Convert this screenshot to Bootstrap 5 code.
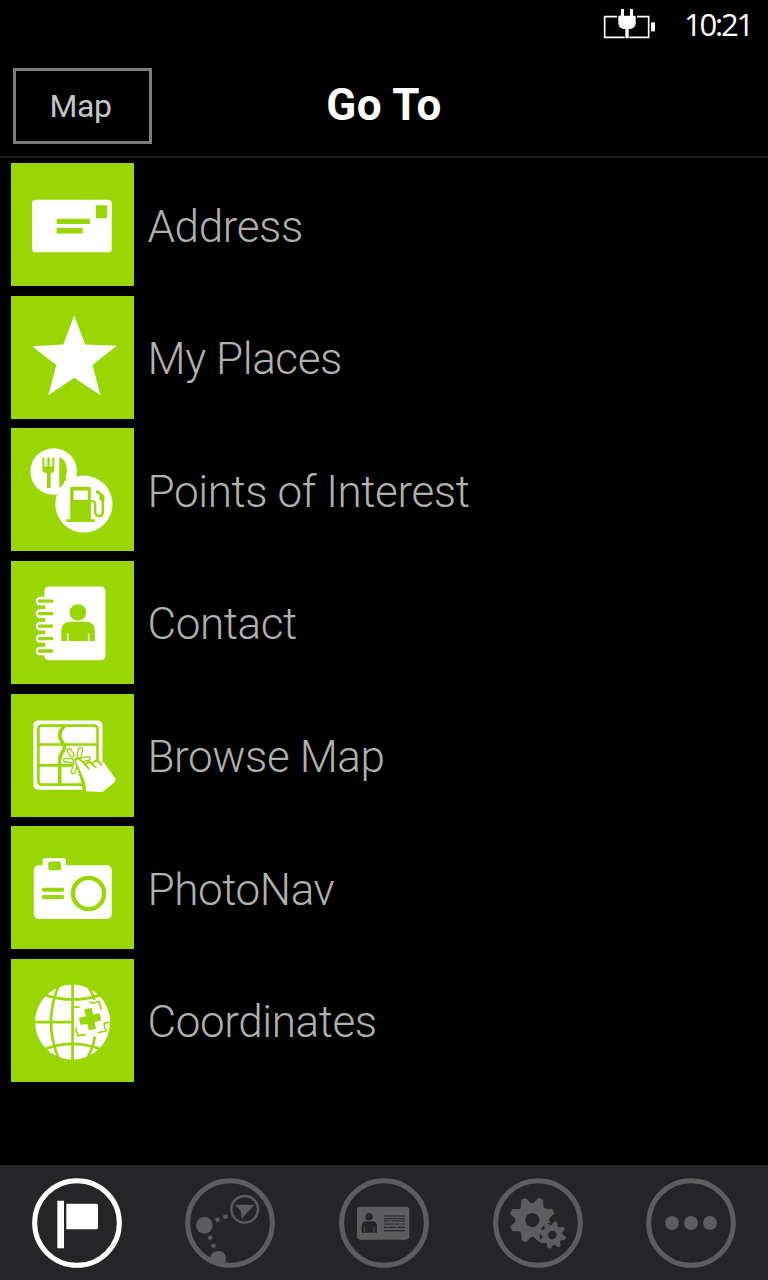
<!DOCTYPE html>
<html lang="en">
<head>
<meta charset="utf-8">
<meta name="viewport" content="width=device-width, initial-scale=1">
<title>Go To</title>
<link href="https://cdn.jsdelivr.net/npm/bootstrap@5.3.0/dist/css/bootstrap.min.css" rel="stylesheet">
<style>
  :root { --lime: #99d603; --dim: #5d5d5f; --bar: #252527; }
  body { background: #000; color: #b3b3b3; font-family: Roboto, sans-serif; }
  .screen { width: 768px; height: 1280px; overflow: hidden; }
  .status { height: 50px; padding: 0 16px 0 603px; color: #fff; }
  .clock { font: 400 31px/48px "Open Sans", sans-serif; letter-spacing: -2.2px; white-space: nowrap; padding-bottom: 2px; }
  .topbar { height: 108px; border-bottom: 2px solid #1c1c1c; padding: 18px 13px 0; display: grid; grid-template-columns: 139px 1fr 139px; }
  .map-btn { height: 76px; width: 139px; border: 3px solid #7c7c7c; border-radius: 0; color: #c4c4c4; font-size: 32px; line-height: 1; padding: 0 4px 0 0; letter-spacing: -.5px; --bs-btn-hover-color: #fff; }
  .title { color: #fff; font-size: 44px; font-weight: 700; line-height: 74px; letter-spacing: .5px; margin: 0; text-align: center; }
  .goto-list { padding: 5.3px 0 0 11.3px; gap: 9.7px; }
  .goto { height: 122.9px; gap: 13px; color: #b0b0b0; text-decoration: none; font-size: 44px; font-weight: 300; line-height: 1; letter-spacing: -.4px; }
  .goto svg { width: 123.2px; height: 122.9px; background: var(--lime); flex: none; }
  .goto span { padding-top: 4px; white-space: nowrap; }
  .tabs { height: 115px; background: var(--bar); color: var(--dim); }
  .tabs a { flex: 1 1 0; color: inherit; }
  .tabs a.active { color: #fff; }
  .tabs svg { width: 90px; height: 90px; display: block; }
  .g { fill: var(--lime); }
  .gs { fill: none; stroke: var(--lime); }
</style>
</head>
<body>
<main class="screen d-flex flex-column">
  <div class="status d-flex align-items-center justify-content-between">
    <svg width="53" height="34" viewBox="39 24 159 102" fill="none" stroke="#fff" stroke-width="5">
      <path d="M81 50H44V112H104M118 112H176V50H141"/>
      <path d="M183 67h12v27h-12z" fill="#fff" stroke="none"/>
      <path d="M93 27h9v20h18V27h9v20h8v22q0 14-14 18h-7v28h-10V87h-7q-14-4-14-18V47h7z" fill="#fff" stroke="none"/>
    </svg>
    <div class="clock">10:21</div>
  </div>

  <header class="topbar">
    <button class="btn map-btn" type="button">Map</button>
    <h1 class="title">Go To</h1>
  </header>

  <nav class="goto-list d-flex flex-column flex-grow-1">
    <a class="goto d-flex align-items-center" href="#">
      <svg viewBox="33 15 370 370" fill="#fff">
        <rect x="96" y="126" width="240" height="158" rx="11"/>
        <path class="g" d="M288 142h34v39h-34zM170 183h100v16H170zM170 211h78v16h-78z"/>
      </svg>
      <span>Address</span>
    </a>
    <a class="goto d-flex align-items-center" href="#">
      <svg viewBox="33 17 370 370" fill="#fff">
        <path d="M223 76L256 163L351 167L278 225L302 316L223 263L145 316L169 225L96 168L190 163Z"/>
      </svg>
      <span>My Places</span>
    </a>
    <a class="goto d-flex align-items-center" href="#">
      <svg viewBox="33 11 370 370" fill="#fff">
        <circle cx="161" cy="142" r="70"/>
        <path class="g" d="M127 100h6v27h9v-27h7v27h8v-27h6v36q0 9-11 11v45h-11v-45q-14-2-14-11zM178 99q18 5 22 31 3 13-2 24v14l-6 4v14l-14 5z"/>
        <circle cx="252" cy="240" r="86"/>
        <path class="g" fill-rule="evenodd" d="M211 194q0-6 6-6h50q6 0 6 6v92h12v8h-86v-8h12zM221 199v29h43v-29z"/>
        <path class="gs" stroke-width="7" d="M273 231h5q8 1 8 10v23q0 12 11 12 12 0 12-13v-37"/>
        <path class="g" d="M292 196l22 19v17q-13 3-16-11l2-7-13-9z"/>
      </svg>
      <span>Points of Interest</span>
    </a>
    <a class="goto d-flex align-items-center" href="#">
      <svg viewBox="33 11 370 370" fill="#fff">
        <rect x="133" y="88" width="184" height="222" rx="14"/>
        <g id="rings">
          <g id="ring"><path class="g" d="M126 142h10v18h-10z"/><rect x="107" y="119" width="50" height="26" rx="13"/><rect class="g" x="114" y="127" width="46" height="10" rx="4"/></g>
          <use href="#ring" y="37.5"/><use href="#ring" y="75"/><use href="#ring" y="112.500"/>
          <rect x="107" y="269" width="50" height="26" rx="13"/><rect class="g" x="114" y="277" width="46" height="10" rx="4"/>
        </g>
        <circle class="g" cx="234" cy="166" r="25"/>
        <path class="g" d="M184 252v-30q0-28 28-28h45q28 0 28 28v30z"/>
        <path d="M202 229h3v23h-3zM265 229h3v23h-3z" stroke="#fff" stroke-width="1"/>
      </svg>
      <span>Contact</span>
    </a>
    <a class="goto d-flex align-items-center" href="#">
      <svg viewBox="33 12 370 370" fill="#fff">
        <rect x="100" y="92" width="208" height="208" rx="14"/>
        <rect class="gs" x="115" y="107" width="178" height="178" rx="10" stroke-width="8"/>
        <path class="gs" stroke-width="8" d="M115 164H293M115 227H250"/>
        <path class="gs" stroke-width="11" d="M195 108q-19 15-15 35 4 11 12 22 4 12-7 25-8 14-6 35v60"/>
        <g stroke="#99d603" stroke-width="4">
          <rect x="-6" y="-14" width="12" height="28" rx="6" transform="translate(212 189) rotate(-32)"/>
          <rect x="-6.500" y="-15" width="13" height="32" rx="6" transform="translate(240 188) rotate(12)"/>
          <rect x="-6" y="-14" width="12" height="30" rx="6" transform="translate(205 212) rotate(-82)"/>
          <rect x="-6" y="-14" width="12" height="30" rx="6" transform="translate(257 208) rotate(78)"/>
          <rect x="-6" y="-16" width="12" height="32" rx="6" transform="translate(223 236) rotate(16)"/>
        </g>
        <path class="g" d="M223 208q5-9 15-4l20 17q5-9 13-7l7 4q5-10 13-6l8 4 12 3 39 48-5 11-44 36-50-3-7-34z"/>
        <path d="M228 213q4-8 13 0l25 27 5-1-10-14q4-9 11-3l16 14 4-1-11-13q4-10 12-4l12 11 3-3-5-8q4-5 10 1l35 50-5 10-36 28-48-2-4-28z"/>
      </svg>
      <span>Browse Map</span>
    </a>
    <a class="goto d-flex align-items-center" href="#">
      <svg viewBox="33 12 370 370" fill="#fff">
        <path d="M128 130v-14q0-8 8-8h54q8 0 8 8v14h121q17 0 17 17v128q0 17-17 17H118q-17 0-17-17V147q0-17 17-17z"/>
        <rect class="g" x="145" y="119" width="38" height="26" rx="6"/>
        <path class="gs" stroke-width="12" stroke-linecap="round" d="M131 204h56M131 226h56"/>
        <circle class="gs" cx="266" cy="215" r="47" stroke-width="13"/>
      </svg>
      <span>PhotoNav</span>
    </a>
    <a class="goto d-flex align-items-center" href="#">
      <svg viewBox="33 11 370 370" fill="#fff">
        <circle cx="218" cy="201" r="113"/>
        <g class="gs" stroke-width="8">
          <path d="M218 86v230M104 201H217M133 119q85 28 170 0M133 283q85-33 170 0"/>
          <path d="M178 86q-50 115 0 230M258 86q19 22 26 49M258 316q21-32 27-72"/>
        </g>
        <path d="M222 158l18-7 8-14 23 8 22-4 12 22 19 27 5 14-19 8-4 22-22 8-28-2-20 9-12-30z"/>
        <path class="gs" stroke-width="5" d="M217 187v-30l22-2M269 140l11 4 17-5 8 25M329 201l-16 3 2 15 5 8-26 6M231 218l-4 5 8 19 24-4"/>
        <path class="g" d="M253 163l22-5 5 20 19-4 5 22-20 5 5 20-22 5-5-20-20 4-5-22 21-5z"/>
      </svg>
      <span>Coordinates</span>
    </a>
  </nav>

  <nav class="tabs d-flex flex-shrink-0">
    <a class="active d-flex align-items-center justify-content-center" href="#" aria-label="Go to">
      <svg viewBox="96 67 270 270" fill="currentColor">
        <circle cx="231" cy="202" r="127" fill="none" stroke="currentColor" stroke-width="15"/>
        <path d="M172 135h20v143h-20zM199 144h90q5 0 5 5v67q0 5-5 5h-90z"/>
      </svg>
    </a>
    <a class="d-flex align-items-center justify-content-center" href="#" aria-label="Route">
      <svg viewBox="556 67 270 270" fill="currentColor">
        <circle cx="691" cy="202" r="127" fill="none" stroke="currentColor" stroke-width="15"/>
        <circle cx="614" cy="209" r="25"/>
        <path d="M632 315q-3-27 24-29 23 1 23 24l-5 17z"/>
        <circle cx="735" cy="161" r="40" fill="none" stroke="currentColor" stroke-width="7"/>
        <path d="M706 147l58 1-38 41-3-24z"/>
        <path d="M646 189l11-4 4 11-11 4zM669 180l12-4 4 11-12 4zM624 243l11-4 4 11-11 4zM634 267l11-4 4 11-11 4z"/>
      </svg>
    </a>
    <a class="d-flex align-items-center justify-content-center" href="#" aria-label="Profile">
      <svg viewBox="42 67 270 270" fill="currentColor">
        <circle cx="177" cy="202" r="127" fill="none" stroke="currentColor" stroke-width="15"/>
        <rect x="96" y="153" width="157" height="99" rx="10"/>
        <g fill="#252527">
          <circle cx="132" cy="183" r="11"/>
          <path d="M110 231v-19q0-15 15-15h16q15 0 15 15v19z"/>
        </g>
        <path d="M119 213v18M147 213v18" stroke="currentColor" stroke-width="2.500"/>
        <path d="M177 181h63M177 189h63" stroke="#252527" stroke-width="3"/>
        <path d="M177 196h17m4 0h42M177 205h30m3 0h14m3 0h13M177 215h10m3 0h23m3 0h24M177 225h63" stroke="#252527" stroke-width="3.500"/>
      </svg>
    </a>
    <a class="d-flex align-items-center justify-content-center" href="#" aria-label="Settings">
      <svg viewBox="502 67 270 270" fill="currentColor">
        <circle cx="637" cy="202" r="127" fill="none" stroke="currentColor" stroke-width="15"/>
        <g transform="translate(620 193) rotate(22)">
          <circle r="36" fill="none" stroke="currentColor" stroke-width="30"/>
          <g id="teeth"><g id="pair"><path id="tooth" d="M-17-46L-9-65Q-8-69-4-69H4Q8-69 9-65L17-46z"/><use href="#tooth" transform="rotate(180)"/></g><use href="#pair" transform="rotate(45)"/><use href="#pair" transform="rotate(90)"/><use href="#pair" transform="rotate(135)"/></g>
        </g>
        <g transform="translate(680 238)">
          <circle r="38" fill="#252527"/>
          <g transform="rotate(14)">
            <circle r="21.500" fill="none" stroke="currentColor" stroke-width="17"/>
            <use href="#teeth" transform="scale(.6)"/>
          </g>
        </g>
      </svg>
    </a>
    <a class="d-flex align-items-center justify-content-center" href="#" aria-label="More">
      <svg viewBox="42 67 270 270" fill="currentColor">
        <circle cx="177" cy="202" r="127" fill="none" stroke="currentColor" stroke-width="15"/>
        <circle cx="120" cy="202" r="21"/><circle cx="177" cy="202" r="21"/><circle cx="234" cy="202" r="21"/>
      </svg>
    </a>
  </nav>
</main>
<script src="https://cdn.jsdelivr.net/npm/bootstrap@5.3.0/dist/js/bootstrap.bundle.min.js"></script>
</body>
</html>
